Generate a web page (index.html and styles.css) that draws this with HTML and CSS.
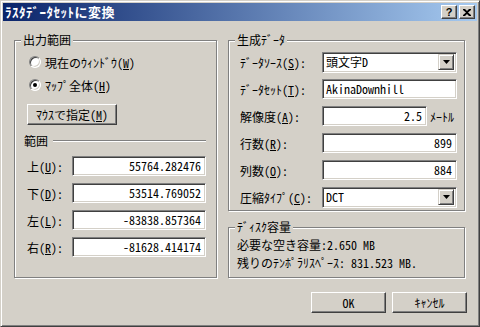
FILE: index.html
```html
<!DOCTYPE html>
<html lang="ja">
<head>
<meta charset="utf-8">
<link rel="stylesheet" href="styles.css">
</head>
<body>
<div class="window">
  <div class="titlebar">
    <span class="title">ﾗｽﾀﾃﾞｰﾀｾｯﾄに変換</span>
    <div class="tbtns">
      <span class="tbtn help">?</span>
      <span class="tbtn close"><svg width="8" height="7" viewBox="0 0 8 7"><path d="M0 0h2l2 2 2-2h2v1l-3 2.5 3 2.5v1h-2l-2-2-2 2h-2v-1l3-2.5-3-2.5z" fill="#000"/></svg></span>
    </div>
  </div>
  <div class="client">
    <div class="columns">
      <fieldset class="group left">
        <legend>出力範囲</legend>
        <div class="gbody lbody">
          <div class="radio-row r1"><span class="radio"></span><span>現在のｳｨﾝﾄﾞｳ(<u>W</u>)</span></div>
          <div class="radio-row r2"><span class="radio checked"></span><span>ﾏｯﾌﾟ全体(<u>H</u>)</span></div>
          <div class="btn mouse">ﾏｳｽで指定(<u>M</u>)</div>
          <div class="subhead"><span>範囲</span><span class="etch"></span></div>
          <div class="frow lrow"><span class="lbl">上(<u>U</u>):</span><div class="edit num">55764.282476</div></div>
          <div class="frow lrow"><span class="lbl">下(<u>D</u>):</span><div class="edit num">53514.769052</div></div>
          <div class="frow lrow"><span class="lbl">左(<u>L</u>):</span><div class="edit num">-83838.857364</div></div>
          <div class="frow lrow"><span class="lbl">右(<u>R</u>):</span><div class="edit num">-81628.414174</div></div>
        </div>
      </fieldset>
      <div class="rightcol">
        <fieldset class="group gen">
          <legend>生成ﾃﾞｰﾀ</legend>
          <div class="gbody rbody">
            <div class="frow rrow"><span class="lbl">ﾃﾞｰﾀｿｰｽ(<u>S</u>):</span><div class="combo"><span class="ctext">頭文字D</span><span class="dd"><svg width="7" height="4" viewBox="0 0 7 4"><path d="M0 0h7l-3.5 4z" fill="#000"/></svg></span></div></div>
            <div class="frow rrow"><span class="lbl">ﾃﾞｰﾀｾｯﾄ(<u>T</u>):</span><div class="edit">AkinaDownhill</div></div>
            <div class="frow rrow"><span class="lbl">解像度(<u>A</u>):</span><div class="edit num short">2.5</div><span class="unit">ﾒｰﾄﾙ</span></div>
            <div class="frow rrow"><span class="lbl">行数(<u>R</u>):</span><div class="edit num">899</div></div>
            <div class="frow rrow"><span class="lbl">列数(<u>O</u>):</span><div class="edit num">884</div></div>
            <div class="frow rrow"><span class="lbl">圧縮ﾀｲﾌﾟ(<u>C</u>):</span><div class="combo"><span class="ctext">DCT</span><span class="dd"><svg width="7" height="4" viewBox="0 0 7 4"><path d="M0 0h7l-3.5 4z" fill="#000"/></svg></span></div></div>
          </div>
        </fieldset>
        <fieldset class="group disk">
          <legend>ﾃﾞｨｽｸ容量</legend>
          <div class="gbody dbody">
            <div class="dline">必要な空き容量:2.650 MB</div>
            <div class="dline">残りのﾃﾝﾎﾟﾗﾘｽﾍﾟｰｽ: 831.523 MB.</div>
          </div>
        </fieldset>
      </div>
    </div>
    <div class="buttons">
      <div class="btn ok">OK</div>
      <div class="btn cancel">ｷｬﾝｾﾙ</div>
    </div>
  </div>
</div>
</body>
</html>
```

FILE: styles.css
```css
* { box-sizing: border-box; }
html, body { margin: 0; padding: 0; }
body {
  width: 480px;
  height: 327px;
  background: #d4d0c8;
  font-family: "Noto Sans CJK JP", sans-serif;
  font-size: 12px;
  font-feature-settings: "hwid" 1;
  color: #000;
  overflow: hidden;
}
u { text-decoration: underline; text-underline-offset: 1px; text-decoration-thickness: 1px; }

.window {
  width: 480px;
  height: 327px;
  border: 1px solid;
  border-color: #d4d0c8 #404040 #404040 #d4d0c8;
  box-shadow: inset 1px 1px #fff, inset -1px -1px #808080;
  padding: 2px;
  display: flex;
  flex-direction: column;
}

.titlebar {
  height: 18px;
  background: linear-gradient(to right, #0a246a, #a6caf0);
  display: flex;
  align-items: center;
  justify-content: space-between;
  padding: 0 2px 0 2px;
}
.title {
  color: #fff;
  font-weight: bold;
  font-size: 13px;
  line-height: 14px;
  letter-spacing: 0.5px;
}
.tbtns { display: flex; gap: 1px; }
.tbtn {
  width: 16px;
  height: 14px;
  background: #d4d0c8;
  border: 1px solid;
  border-color: #fff #404040 #404040 #fff;
  box-shadow: inset -1px -1px #808080;
  display: flex;
  align-items: center;
  justify-content: center;
  font-family: "Liberation Sans", sans-serif;
  font-weight: bold;
  font-size: 11px;
  line-height: 12px;
}
.tbtn.close { margin-left: 1px; }

.client {
  flex: 1;
  padding: 12px 0 0 11px;
  display: flex;
  flex-direction: column;
}
.columns {
  display: flex;
  gap: 11px;
  align-items: stretch;
}

.group {
  margin: 0;
  padding: 0;
  min-width: 0;
  border: 1px solid #808080;
  box-shadow: inset 1px 1px #fff, 1px 1px #fff;
}
.group legend {
  margin-left: 6px;
  padding: 0 2px;
  line-height: 14px;
  height: 14px;
  background: #d4d0c8;
}
.left { width: 203px; }
.rightcol {
  width: 237px;
  display: flex;
  flex-direction: column;
}

.lbody { padding: 5px 10px 0 12px; }
.radio-row {
  height: 20px;
  display: flex;
  align-items: center;
  gap: 4px;
  margin-left: 2px;
}
.r2 { margin-top: 3px; }
.radio {
  width: 12px;
  height: 12px;
  border-radius: 50%;
  background: #fff;
  border: 1px solid;
  border-color: #808080 #fff #fff #808080;
  box-shadow: inset 1px 1px #404040, inset -1px -1px #d4d0c8;
  position: relative;
  flex: none;
}
.radio.checked::after {
  content: "";
  position: absolute;
  left: 3px;
  top: 3px;
  width: 4px;
  height: 4px;
  border-radius: 50%;
  background: #000;
}

.btn {
  background: #d4d0c8;
  border: 1px solid;
  border-color: #fff #404040 #404040 #fff;
  box-shadow: inset -1px -1px #808080;
  display: flex;
  align-items: center;
  justify-content: center;
  line-height: 14px;
}
.mouse {
  width: 90px;
  height: 21px;
  margin-top: 9px;
}
.subhead {
  display: flex;
  align-items: center;
  gap: 5px;
  height: 14px;
  line-height: 14px;
  margin: 9px 0 0 -3px;
}
.etch {
  flex: 1;
  height: 2px;
  border-top: 1px solid #808080;
  border-bottom: 1px solid #fff;
}

.frow {
  display: flex;
  align-items: center;
  height: 20px;
}
.lrow { margin-top: 7px; }
.subhead + .lrow { margin-top: 8px; }
.lrow .lbl { width: 45px; }
.lbl { flex: none; white-space: nowrap; }

.edit {
  flex: 1;
  height: 20px;
  background: #fff;
  border: 1px solid;
  border-color: #808080 #fff #fff #808080;
  box-shadow: inset 1px 1px #404040, inset -1px -1px #d4d0c8;
  padding: 0 4px 0 3px;
  line-height: 18px;
  white-space: nowrap;
  overflow: hidden;
}
.edit.num { text-align: right; }
.edit.short { flex: none; width: 105px; }
.unit { margin-left: 3px; white-space: nowrap; }

.gbody.rbody { padding: 5px 7px 3px 11px; }
.rrow + .rrow { margin-top: 7px; }
.rrow .lbl { width: 82px; }
.combo {
  flex: 1;
  height: 21px;
  background: #fff;
  border: 1px solid;
  border-color: #808080 #fff #fff #808080;
  box-shadow: inset 1px 1px #404040, inset -1px -1px #d4d0c8;
  display: flex;
  align-items: center;
  padding: 2px 2px 2px 3px;
}
.ctext { flex: 1; line-height: 16px; }
.dd {
  width: 16px;
  height: 16px;
  background: #d4d0c8;
  border: 1px solid;
  border-color: #d4d0c8 #404040 #404040 #d4d0c8;
  box-shadow: inset 1px 1px #fff, inset -1px -1px #808080;
  display: flex;
  align-items: center;
  justify-content: center;
}

.disk { margin-top: 9px; flex: 1; }
.dbody { padding: 2px 7px 5px 8px; }
.dline { height: 18px; line-height: 18px; white-space: nowrap; }

.buttons {
  display: flex;
  justify-content: flex-end;
  gap: 6px;
  margin-top: 14px;
  padding-right: 10px;
}
.ok, .cancel { width: 75px; height: 21px; }
```
